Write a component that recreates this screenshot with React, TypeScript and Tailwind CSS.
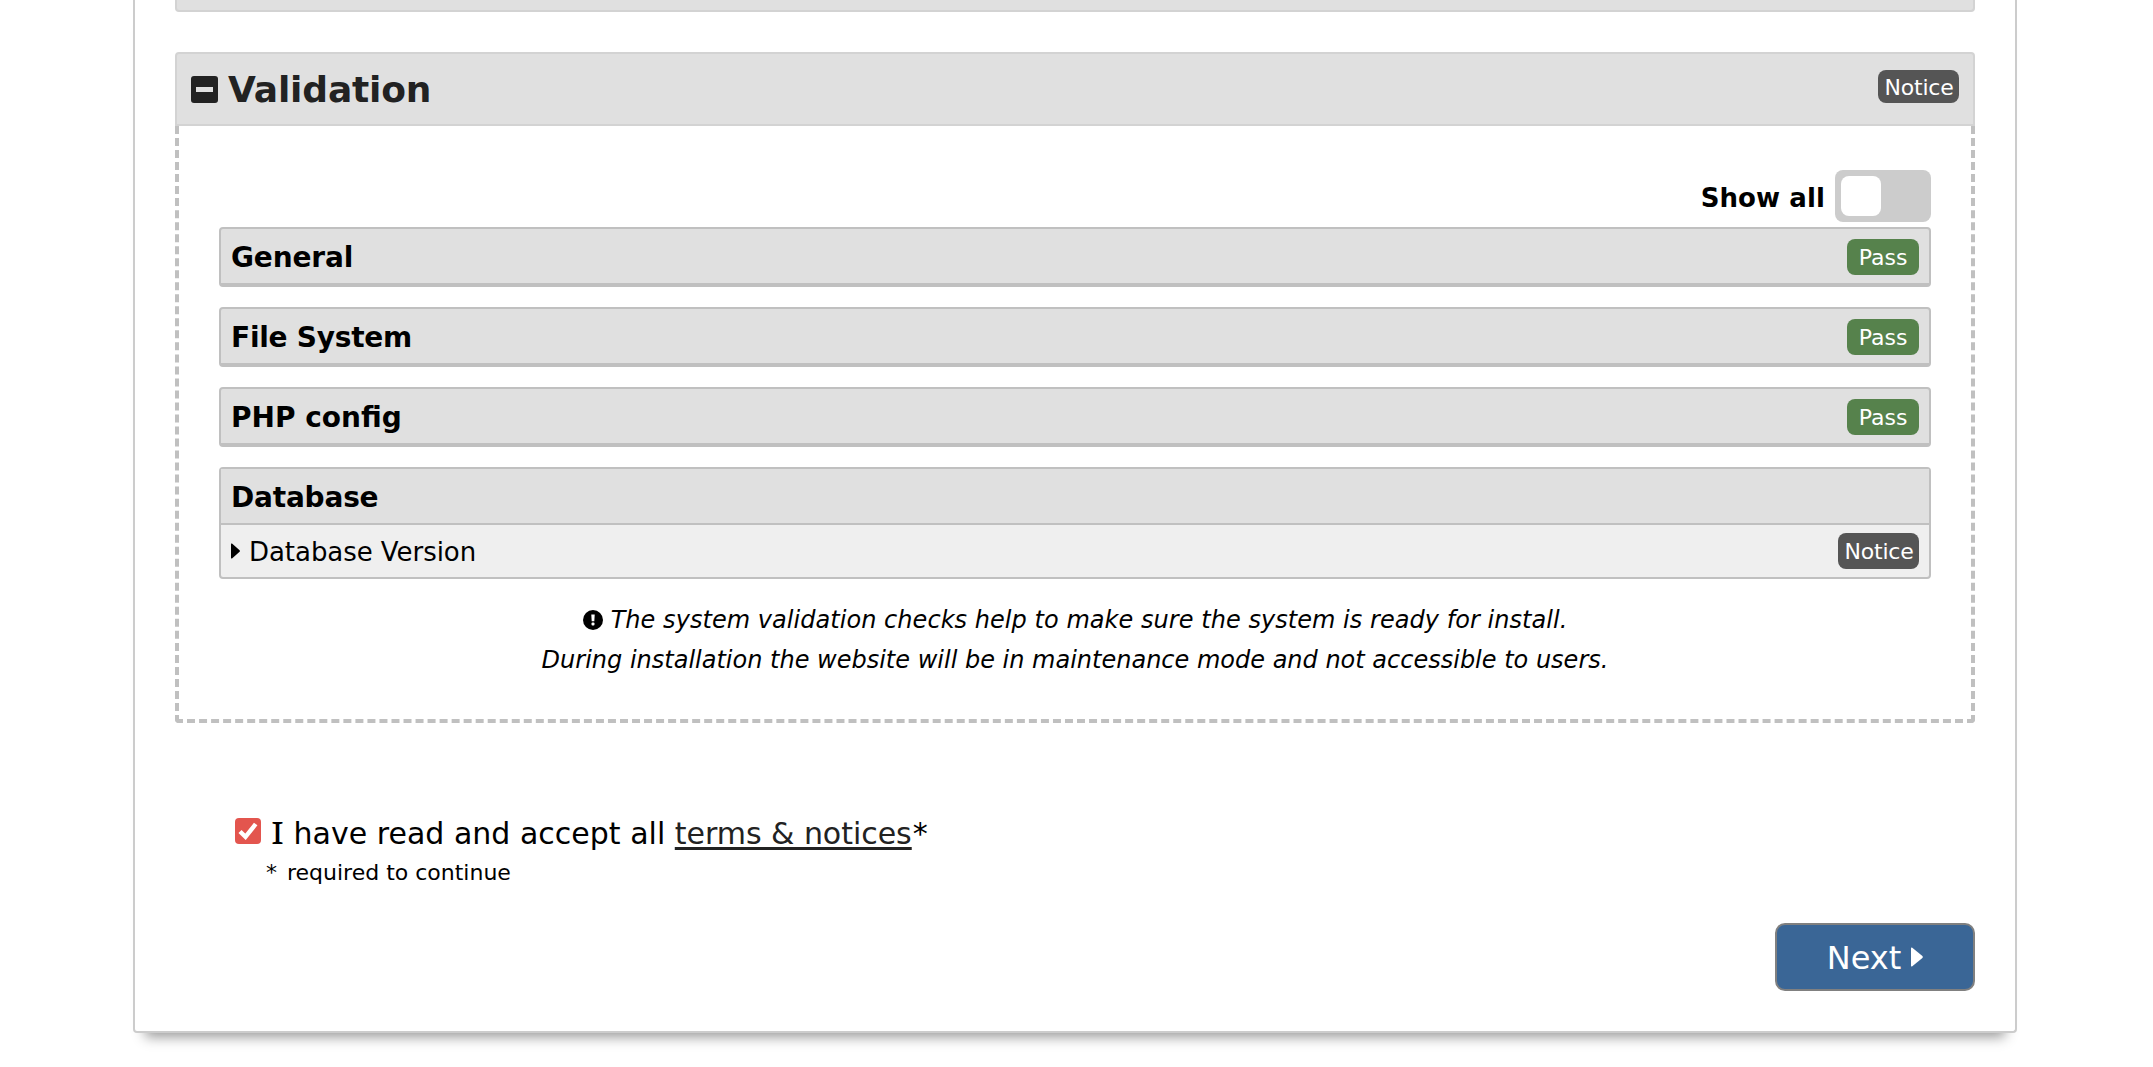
import React from "react";

type Status = "Pass" | "Notice";

const sections = [
  { title: "General", tracking: "tracking-[-0.15px]" },
  { title: "File System", tracking: "tracking-[-0.25px]" },
  { title: "PHP config", tracking: "tracking-normal" },
];

function Badge({ status }: { status: Status }) {
  return (
    <span
      className={
        "flex h-9 items-center justify-center rounded-lg pt-px text-[22px] leading-none text-white " +
        (status === "Pass" ? "w-[72px] bg-[#56824c]" : "w-[81px] bg-[#555555] pl-px tracking-[-0.2px]")
      }
    >
      {status}
    </span>
  );
}

function SectionRow({ title, tracking }: { title: string; tracking: string }) {
  return (
    <div className="mb-5 flex h-[60px] items-center justify-between rounded border-2 border-b-4 border-[#c0c0c0] bg-[#e0e0e0] px-2.5 pt-[2px]">
      <span className={"pt-px text-[28px] leading-none font-bold " + tracking}>{title}</span>
      <Badge status="Pass" />
    </div>
  );
}

function Validation() {
  return (
    <section className="mt-10">
      <header className="flex h-[74px] items-center justify-between rounded-t border-2 border-[#d3d3d3] bg-[#e0e0e0] pr-3.5 pl-[14px]">
        <h2 className="flex items-center text-[36px] leading-none font-bold tracking-[-0.15px] text-[#222222]">
          <svg className="mr-[10px] h-[27px] w-[27px]" viewBox="0 0 27 27">
            <rect width="27" height="27" rx="3" fill="#222222" />
            <rect x="5" y="11" width="17" height="5" fill="#e0e0e0" />
          </svg>
          <span className="pt-[2px]">Validation</span>
        </h2>
        <span className="mb-[5px] flex h-[33px] w-[81px] items-center justify-center rounded-lg bg-[#555555] pt-[2px] pl-px text-[22px] leading-none tracking-[-0.2px] text-white">
          Notice
        </span>
      </header>
      <div className="h-[597px] rounded-b border-4 border-t-0 border-dashed border-[#c0c0c0] px-10 pt-11">
        <div className="mb-[5px] flex h-[52px] items-center justify-end">
          <span className="mr-[10px] pt-[3px] text-[26px] leading-none font-bold tracking-[0.1px]">Show all</span>
          <button className="flex h-[52px] w-24 items-center rounded-lg bg-[#cccccc] pl-1.5">
            <span className="h-10 w-10 rounded-lg bg-white" />
          </button>
        </div>
        {sections.map((s) => (
          <SectionRow key={s.title} title={s.title} tracking={s.tracking} />
        ))}
        <div className="h-28 rounded border-2 border-[#c0c0c0] bg-[#efefef]">
          <div className="flex h-14 items-center border-b-2 border-[#c0c0c0] bg-[#e0e0e0] px-2.5 pt-[3px] text-[28px] leading-none font-bold tracking-[-0.2px]">
            Database
          </div>
          <div className="flex h-[52px] items-center justify-between px-2.5">
            <span className="flex items-center text-[26px] leading-none tracking-[-0.05px]">
              <svg className="mr-[9px] h-4 w-[9px]" viewBox="0 0 9 16">
                <path d="M0 1.2Q0 0 1 .6L8.6 7.2Q9.2 8 8.6 8.8L1 15.4Q0 16 0 14.8Z" />
              </svg>
              <span className="pt-[2px]">Database Version</span>
            </span>
            <Badge status="Notice" />
          </div>
        </div>
        <p className="mt-[21px] text-center text-[24px] leading-10 italic">
          <svg className="mr-[8px] -mt-[3px] inline h-5 w-5" viewBox="0 0 20 20">
            <circle cx="10" cy="10" r="10" />
            <path d="M8.3 4.5h3.4l-.4 6.8H8.7Z" fill="white" />
            <rect x="8.5" y="12.5" width="3" height="3" rx="1" fill="white" />
          </svg>
          <span className="tracking-[0.045px]">
            The system validation checks help to make sure the system is ready for install.
          </span>
          <br />
          During installation the website will be in maintenance mode and not accessible to users.
        </p>
      </div>
    </section>
  );
}

export default function App() {
  return (
    <div className="h-[1067px] overflow-hidden bg-white font-['DejaVu_Sans',sans-serif] text-black">
      <main className="ml-[133px] h-[1033px] w-[1884px] rounded-b border-2 border-t-0 border-[#cccccc] bg-white px-10 shadow-[0_16px_12px_-12px_#999]">
        <div className="h-3 rounded-b border-2 border-t-0 border-[#d3d3d3] bg-[#e0e0e0]" />
        <Validation />
        <div className="mt-[90px] flex h-10 items-center pl-[60px] text-[30px] leading-none">
          <span className="mr-[10px] mb-[4px] flex h-[26px] w-[26px] items-center justify-center rounded bg-[#e3554e]">
            <svg className="h-[18px] w-5" viewBox="0 0 20 18">
              <path d="M2 9.5L7.5 14.8L17.7 2" fill="none" stroke="white" strokeWidth="4.4" />
            </svg>
          </span>
          <span className="tracking-[0.01px] whitespace-pre">
            <span className="inline-block w-[13px] origin-left scale-x-[1.28] font-['Noto_Sans',sans-serif]">I</span> have read and accept all{" "}
            <a className="tracking-[-0.03px] text-[#222222] underline decoration-[3px] underline-offset-[3px] [text-decoration-skip-ink:none]">
              terms &amp; notices
            </a>
            <span className="ml-px">*</span>
          </span>
        </div>
        <div className="mt-[4px] pl-[91px] text-[22px] leading-8">
          *<span className="ml-[3px]"> required to continue</span>
        </div>
        <div className="mt-[34px] flex justify-end">
          <button className="flex h-[68px] w-[200px] items-center justify-center rounded-[10px] border-2 border-[#808080] bg-[#3a6696] text-[32px] leading-none text-white">
            <span className="pt-[2px]">Next</span>
            <svg className="ml-[10px] h-5 w-3" viewBox="0 0 12 20" fill="white">
              <path d="M0 1.5Q0 0 1.3 .8L11.4 9Q12.2 10 11.4 11L1.3 19.2Q0 20 0 18.5Z" />
            </svg>
          </button>
        </div>
      </main>
    </div>
  );
}
